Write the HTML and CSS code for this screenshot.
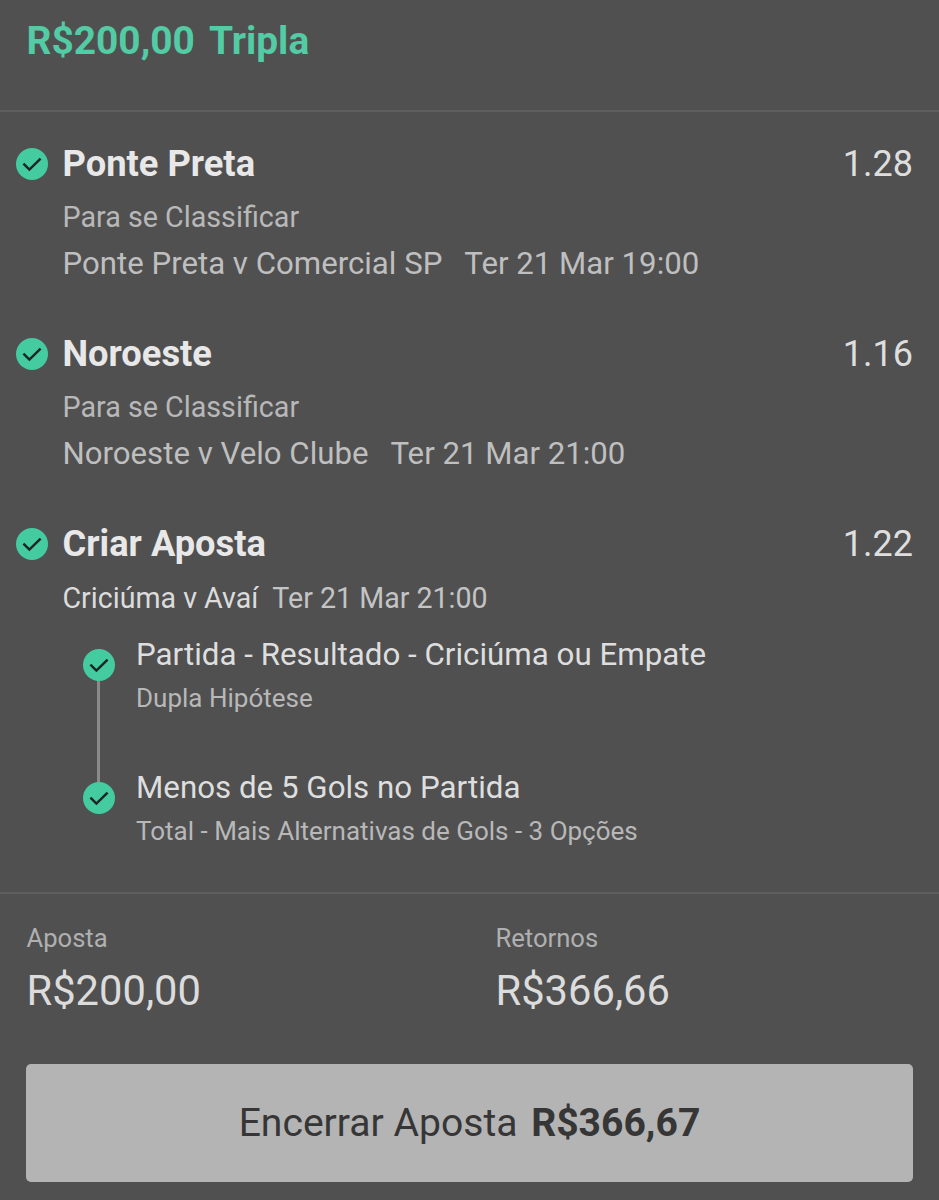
FILE: index.html
```html
<!DOCTYPE html>
<html lang="pt-BR">
<head>
<meta charset="utf-8">
<title>Tripla</title>
<link rel="stylesheet" href="styles.css">
</head>
<body>
<svg class="defs" width="0" height="0" aria-hidden="true">
  <symbol id="tick" viewBox="0 0 32 32">
    <circle cx="16" cy="16" r="16" fill="#45cba0"/>
    <path d="M7.4 15.6l6 6L24.6 10.6" fill="none" stroke="#1c2623" stroke-width="2.5"/>
  </symbol>
</svg>
<main class="slip">
  <header class="head">
    <span>R$200,00</span><span>Tripla</span>
  </header>
  <section class="legs">
    <article class="leg">
      <svg class="tick"><use href="#tick"/></svg>
      <div class="leg-body">
        <div class="leg-top"><h2>Ponte Preta</h2><span class="odds">1.28</span></div>
        <p class="market">Para se Classificar</p>
        <p class="match"><span>Ponte Preta v Comercial SP</span><span>Ter 21 Mar 19:00</span></p>
      </div>
    </article>
    <article class="leg">
      <svg class="tick"><use href="#tick"/></svg>
      <div class="leg-body">
        <div class="leg-top"><h2>Noroeste</h2><span class="odds">1.16</span></div>
        <p class="market">Para se Classificar</p>
        <p class="match"><span>Noroeste v Velo Clube</span><span>Ter 21 Mar 21:00</span></p>
      </div>
    </article>
    <article class="leg">
      <svg class="tick"><use href="#tick"/></svg>
      <div class="leg-body">
        <div class="leg-top"><h2>Criar Aposta</h2><span class="odds">1.22</span></div>
        <p class="builder-match"><span>Criciúma v Avaí</span><span class="builder-date">Ter 21 Mar 21:00</span></p>
      </div>
    </article>
    <ul class="picks">
      <li class="pick">
        <svg class="pick-tick"><use href="#tick"/></svg>
        <h3>Partida - Resultado - Criciúma ou Empate</h3>
        <p>Dupla Hipótese</p>
      </li>
      <li class="pick">
        <svg class="pick-tick"><use href="#tick"/></svg>
        <h3>Menos de 5 Gols no Partida</h3>
        <p>Total - Mais Alternativas de Gols - 3 Opções</p>
      </li>
    </ul>
  </section>
  <section class="totals">
    <div class="total"><p class="total-label">Aposta</p><p class="total-value">R$200,00</p></div>
    <div class="total"><p class="total-label">Retornos</p><p class="total-value">R$366,66</p></div>
  </section>
  <button class="cashout" type="button">Encerrar Aposta <b>R$366,67</b></button>
</main>
</body>
</html>
```
FILE: styles.css
```css
* { box-sizing: border-box; }
html, body { margin: 0; padding: 0; }
body {
  background: #505050;
  font-family: Roboto, "Liberation Sans", sans-serif;
  color: #e6e6e6;
}
h2, h3, p, ul { margin: 0; padding: 0; list-style: none; font-weight: 400; }
.defs { position: absolute; }
.slip { height: 1200px; overflow: hidden; }

.head {
  height: 112px;
  padding: 19px 26.5px 0;
  border-bottom: 2px solid #5e5e5e;
  display: flex;
  gap: 14px;
  font-size: 38.9px;
  line-height: 43px;
  font-weight: 700;
  color: #53cba5;
}

.legs { padding-top: 32px; height: 782px; border-bottom: 2px solid #5e5e5e; }
.leg { display: flex; padding-left: 16px; gap: 15px; height: 190px; }
.leg:nth-child(3) { height: 98px; }
.tick { width: 32px; height: 32px; margin-top: 4px; flex: none; }
.leg-body { flex: 1; margin-left: -0.5px; padding-right: 26px; }
.leg-top { display: flex; justify-content: space-between; line-height: 40px; }
.leg-top h2 { font-size: 36.3px; font-weight: 700; color: #e8e8e8; }
.odds { font-size: 36px; color: #dedede; }
.market { margin-top: 17px; font-size: 28.7px; line-height: 32px; color: #b8b8b8; }
.match { margin-top: 13px; display: flex; gap: 22px; font-size: 31.2px; line-height: 36px; color: #bfbfbf; }
.builder-match { margin-top: 17px; display: flex; gap: 14px; font-size: 28.6px; line-height: 34px; color: #dcdcdc; }
.builder-date { color: #c4c4c4; }

.picks { padding: 0 0 0 136px; margin-top: 15px; }
.pick { position: relative; height: 133px; }
.pick h3 { font-size: 31.3px; line-height: 36px; color: #dedede; }
.pick p { margin-top: 9px; font-size: 26px; line-height: 32px; color: #b8b8b8; }
.pick-tick { position: absolute; left: -53px; top: 12px; width: 32px; height: 32px; z-index: 1; }
.pick:first-child::before {
  content: "";
  position: absolute;
  left: -39px;
  top: 30px;
  width: 3px;
  height: 125px;
  background: #8a8a8a;
}

.totals { display: flex; padding: 29px 26.5px 0; height: 170px; }
.total { flex: none; width: 469px; }
.total-label { font-size: 25.6px; line-height: 30px; color: #b0b0b0; }
.total-value { margin-top: 14px; font-size: 41.7px; line-height: 48px; color: #dcdcdc; }

.cashout {
  display: block;
  width: 887px;
  height: 118px;
  margin-left: 26px;
  border: 0;
  border-radius: 5px;
  background: #b4b4b4;
  color: #363636;
  font-family: inherit;
  font-size: 39.1px;
}
.cashout b { font-weight: 700; margin-left: 4px; }
```
